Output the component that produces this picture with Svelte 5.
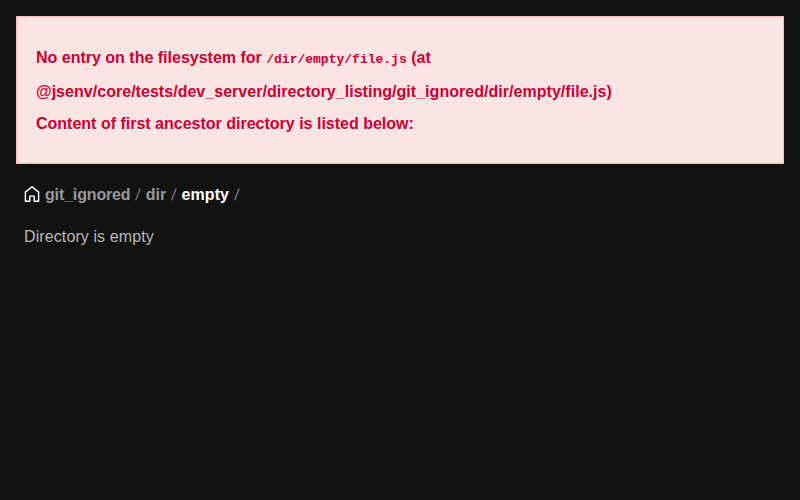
<script>
  const crumbs = ['git_ignored', 'dir', 'empty'];
</script>

<main>
  <div class="error">
    <p class="message">No entry on the filesystem for <code>/dir/empty/file.js</code> (at<br /><span class="path">@jsenv/core/tests/dev_server/directory_listing/git_ignored/dir/empty/file.js)</span></p>
    <p class="hint">Content of first ancestor directory is listed below:</p>
  </div>
  <h1>
    <svg viewBox="0 0 16 16" width="16" height="16" fill="none" stroke="#fff" stroke-width="1.45" stroke-linejoin="round">
      <path d="M1.4 6.1 8 .8l6.6 5.3v9.1h-4.4v-5.1H5.8v5.1H1.4z" />
    </svg>
    {#each crumbs as crumb, i}
      <span class="crumb" class:first={i === 0} class:current={i === 2}>{crumb}</span><span class="sep">/</span>
    {/each}
  </h1>
  <p class="empty">Directory is empty</p>
</main>

<style>
  :global(body) { background: #121212; }
  main { padding: 16px; font: 16px/20px "Liberation Sans", Arial, sans-serif; color: #b8b8b8; }
  .error { box-sizing: border-box; height: 148px; padding: 24px 19px; border: 1px solid #ffb8b8; background: #fce4e4; color: #cc0033; font-weight: bold; }
  p { margin: 0; white-space: nowrap; }
  .message { line-height: 34px; }
  .path { letter-spacing: 0.035px; }
  .hint { line-height: 30px; }
  code { font: bold 13px/1 "Liberation Mono", monospace; }
  h1 { display: flex; align-items: center; height: 20px; margin: 21px 0 0 8px; font-size: 16px; color: #999; }
  svg { margin: 0 5px 2px 0; }
  .first { letter-spacing: -0.15px; }
  .sep { width: 15.3px; text-align: center; font-weight: normal; color: #808080; transform: skewX(-6deg); }
  .current { color: #fff; letter-spacing: 0.08px; }
  .empty { margin: 22px 0 0 8px; letter-spacing: 0.1px; }
</style>
